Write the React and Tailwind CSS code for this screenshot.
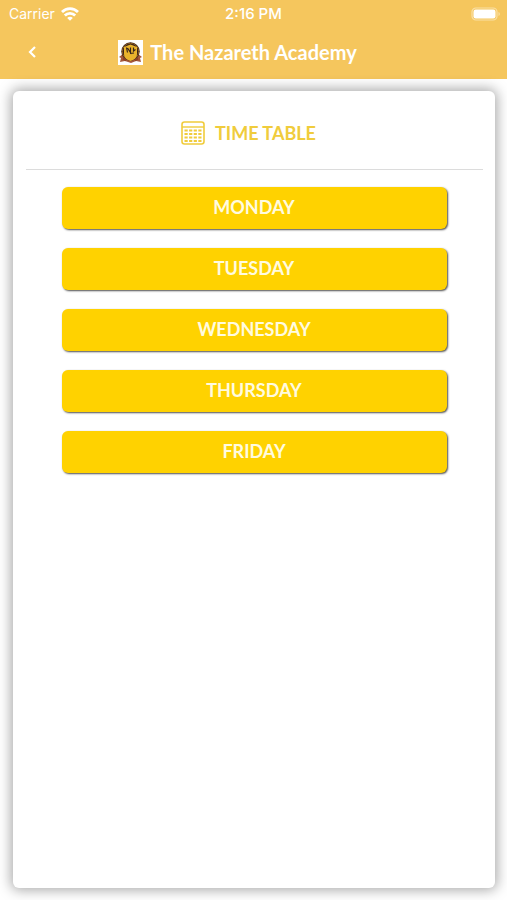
const days = ["MONDAY", "TUESDAY", "WEDNESDAY", "THURSDAY", "FRIDAY"];

function WifiIcon() {
  return (
    <svg viewBox="0 0 18 14" className="h-[14px] w-[18px]" fill="none" stroke="white" strokeWidth="2.8" aria-hidden="true">
      <path d="M1 5C5.500 0.500 12.500 0.500 17 5" />
      <path d="M3.800 8.400C6.600 5.600 11.400 5.600 14.200 8.400" />
      <path d="M6.200 11C7.800 9.400 10.200 9.400 11.800 11L9 13.800Z" fill="white" stroke="none" />
    </svg>
  );
}

function BatteryIcon() {
  return (
    <svg viewBox="0 0 30 14" className="h-[14px] w-[30px]" aria-hidden="true">
      <rect x="1" y="1" width="25" height="12" rx="4" fill="none" stroke="#fae0a6" strokeWidth="1.200" />
      <rect x="2.500" y="2.500" width="22" height="9" rx="2.200" fill="white" />
      <path d="M27.500 5v4c1.800-.6 1.800-3.400 0-4z" fill="#fae0a6" />
    </svg>
  );
}

function Crest() {
  return (
    <svg viewBox="0 0 25 25" className="size-[25px] shrink-0" aria-hidden="true">
      <rect width="25" height="25" fill="white" />
      <path d="M1 17l4-3h15l4 3-2 1 1 4-5-1-5 2-6-2-5 1 1-4z" fill="#a5573a" />
      <circle cx="12.500" cy="11.500" r="9.200" fill="#3a2419" />
      <circle cx="12.500" cy="11.500" r="8.200" fill="none" stroke="#8d5c24" strokeWidth="1" />
      <path d="M6 7l6.500-2.500 6.500 2.500v7c0 4-3.500 6-6.500 7-3-1-6.500-3-6.500-7z" fill="#e9b32c" />
      <path d="M8.500 7.500l1 5M9.500 8l3 4.500V7.500M15.500 7.500v3.500l2-1.500M12 13.500l4-.5" stroke="#38251a" strokeWidth="1.200" fill="none" />
      <path d="M5 18.500l3 2M20 18.500l-3 2" stroke="#8c3f22" strokeWidth="1.800" fill="none" />
    </svg>
  );
}

function CalendarIcon() {
  return (
    <svg viewBox="0 0 24 24" className="size-6 shrink-0" fill="none" stroke="#f0cc3c" aria-hidden="true">
      <rect x="1" y="1" width="22" height="22" rx="2.500" strokeWidth="1.600" />
      <path d="M1 6h22" strokeWidth="1.400" />
      <path d="M3.500 9.500h17M3.500 13h17M3.500 16.500h17M3.500 20h17" strokeWidth="2" strokeDasharray="3.200 1.400" />
    </svg>
  );
}

export default function App() {
  return (
    <div className="flex min-h-screen flex-col bg-white font-['Lato','Liberation_Sans',sans-serif]">
      <header className="bg-[#f5c65d] text-white">
        <div className="grid h-[27px] grid-cols-3 items-center px-[6px] font-['Inter','Liberation_Sans',sans-serif] text-[14px]">
          <div className="flex items-center gap-[6px] pl-[3px]">
            <span>Carrier</span>
            <WifiIcon />
          </div>
          <time className="pt-px text-center text-[15px] font-medium">2:16 PM</time>
          <div className="flex justify-end">
            <BatteryIcon />
          </div>
        </div>
        <div className="grid h-[52px] grid-cols-[48px_1fr_80px] items-center pb-[2px]">
          <button type="button" aria-label="Back" className="flex h-full items-center justify-center pl-4">
            <svg viewBox="0 0 8 12" className="h-3 w-2" fill="none" stroke="white" strokeWidth="2.200" aria-hidden="true">
              <path d="M7 1L2 6l5 5" />
            </svg>
          </button>
          <div className="flex items-center justify-center gap-[7px]">
            <Crest />
            <h1 className="text-[20px] leading-6 font-bold whitespace-nowrap">The Nazareth Academy</h1>
          </div>
        </div>
      </header>

      <main className="flex flex-1 flex-col py-3 pr-3 pl-[13px]">
        <section className="flex-1 rounded-md bg-white pr-3 pl-[13px] shadow-[0_0_13px_2px_rgba(0,0,0,0.35)]">
          <div className="flex h-[79px] items-center justify-center gap-[10px] border-b border-[#dcdcdc] pt-[6px] pr-3">
            <CalendarIcon />
            <h2 className="text-[18px] leading-6 font-bold text-[#f0cc3c]">TIME TABLE</h2>
          </div>
          <div className="flex flex-col gap-[19px] px-9 pt-[17px]">
            {days.map((day) => (
              <button
                key={day}
                type="button"
                className="h-[42px] rounded-md bg-[#ffd200] pr-px pb-[2px] text-[18px] leading-6 font-bold text-[#fffbe0] shadow-[1px_1px_2px_rgba(0,0,0,0.7)]"
              >
                {day}
              </button>
            ))}
          </div>
        </section>
      </main>
    </div>
  );
}
